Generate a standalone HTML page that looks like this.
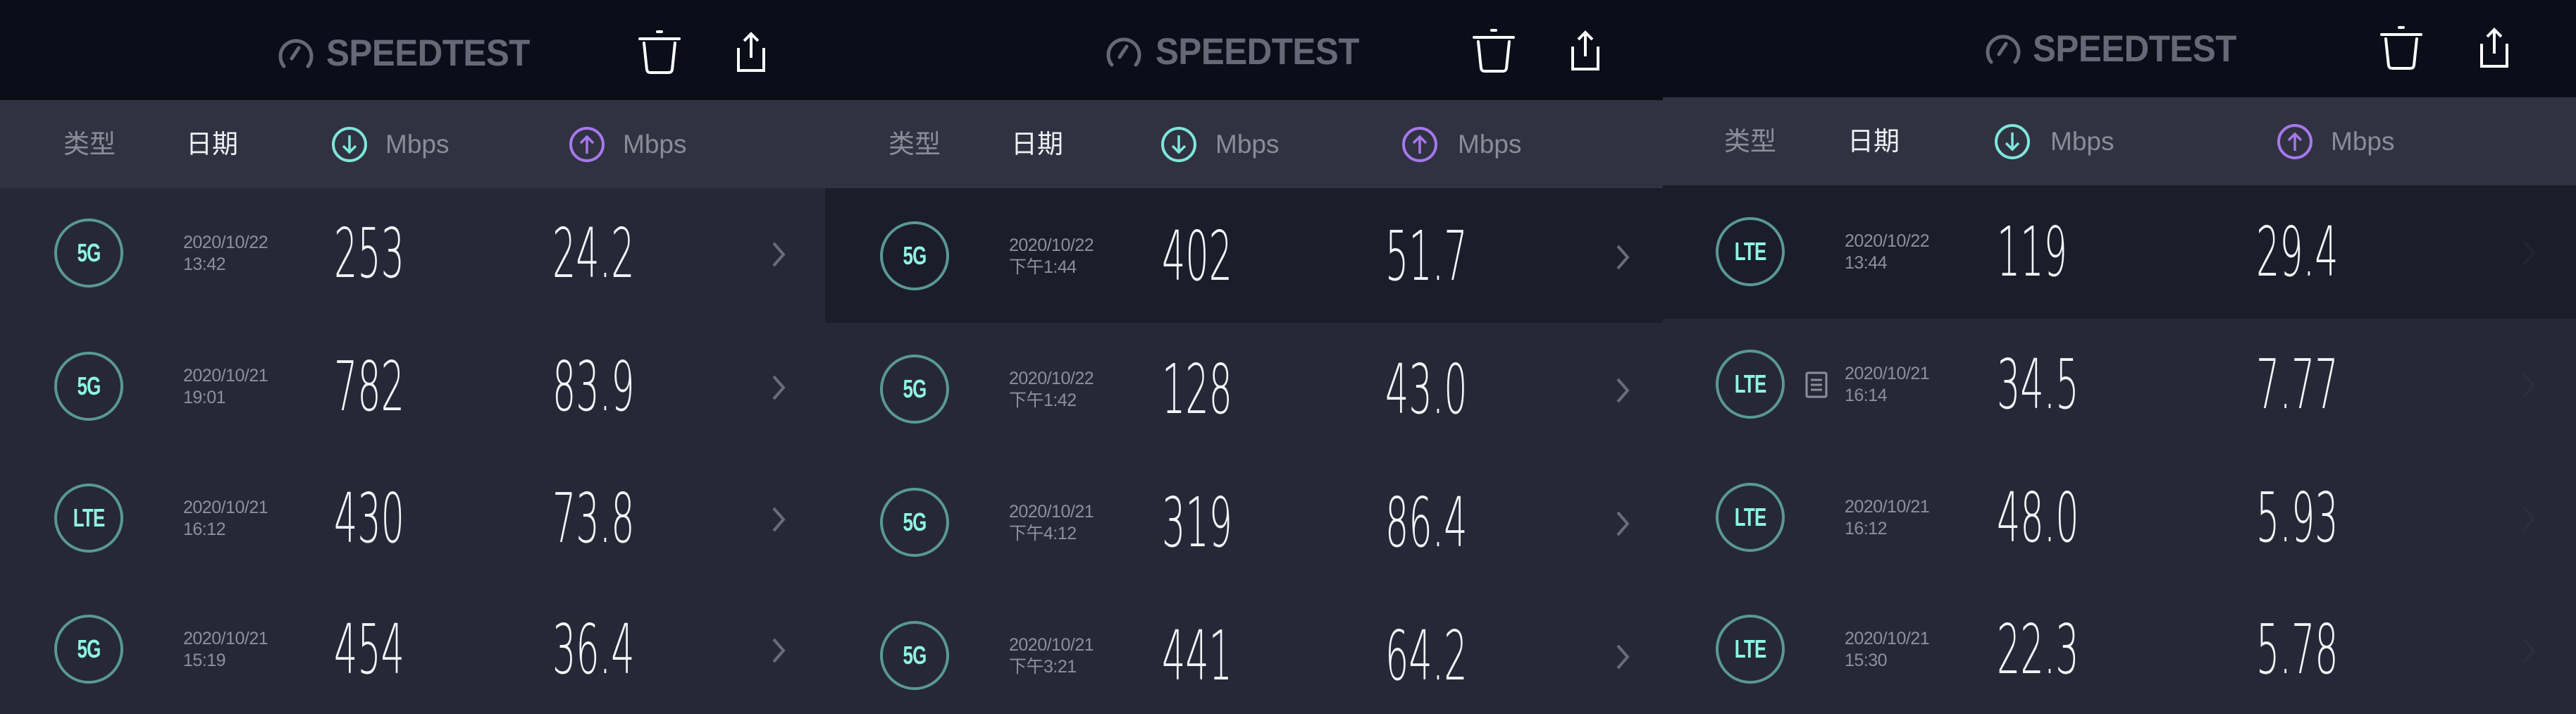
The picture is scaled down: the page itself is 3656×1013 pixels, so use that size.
<!DOCTYPE html>
<html><head><meta charset="utf-8"><style>
*{margin:0;padding:0;box-sizing:border-box}
body{width:3656px;height:1013px;background:#262837;position:relative;overflow:hidden;font-family:"Liberation Sans","Noto Sans CJK SC",sans-serif}
.p{position:absolute;top:0;height:1013px;overflow:hidden;background:#262837}
.a{position:absolute}
.top{position:absolute;left:0;right:0;top:0;background:#0b0d19}
.hdr{position:absolute;left:0;right:0;background:#303241}
.hl{position:absolute;left:0;right:0;background:#1b1d2b}
.logo{position:absolute;font-weight:bold;font-size:53px;line-height:50px;color:#666877;letter-spacing:-0.5px;transform:scaleX(.93);transform-origin:0 0}
.ht{position:absolute;font-size:37px;line-height:36px;color:#8a8c98;top:187px}
.w{color:#f0f0f4}
.badge{position:absolute;width:98px;height:98px;border:4px solid #5a9893;border-radius:50%;display:flex;align-items:center;justify-content:center}
.badge span{font-weight:bold;font-size:36px;color:#8ef3e4;transform:scaleX(.72);display:block;letter-spacing:-1px}
.dt{position:absolute;font-size:25px;line-height:31px;color:#8d8f9b;letter-spacing:-0.5px}
.n{position:absolute;font-family:"DejaVu Sans","Liberation Sans",sans-serif;font-weight:200;font-size:97px;line-height:99px;color:#f4f4f8;transform:scaleX(.54);transform-origin:0 0;white-space:nowrap;top:0}
.ch{position:absolute}
</style></head><body>

<!-- PANEL 1 -->
<div class="p" style="left:0;width:1171px">
<div class="top" style="height:142px"></div>
<div class="hdr" style="top:142px;height:125px"></div>
<svg class="a" style="left:394px;top:52px" width="52" height="46" viewBox="0 0 52 46"><path d="M9 42 A22 22 0 1 1 43 42" fill="none" stroke="#666877" stroke-width="5" stroke-linecap="round"/><path d="M20 31 L30 16" stroke="#666877" stroke-width="5" stroke-linecap="round"/></svg>
<div class="logo" style="left:463px;top:51px">SPEEDTEST</div>
<svg class="a" style="left:905px;top:42px" width="62" height="64" viewBox="0 0 62 64"><path d="M28 3h6M3 13h56M9 19l4 38q1 4 5 4h26q4 0 5-4l4-38" fill="none" stroke="#fff" stroke-width="4" stroke-linecap="round"/></svg>
<svg class="a" style="left:1043px;top:44px" width="46" height="60" viewBox="0 0 46 60"><path d="M23 4v34M13 14l10-10 10 10M5 24v32h36V24" fill="none" stroke="#fff" stroke-width="4"/></svg>
<div class="ht" style="left:90px">类型</div><div class="ht w" style="left:264px">日期</div>
<svg class="a" style="left:470px;top:179px" width="52" height="52" viewBox="0 0 52 52"><circle cx="26" cy="26" r="23" fill="none" stroke="#7ee6da" stroke-width="4"/><path d="M26 13v24M17 28l9 9 9-9" fill="none" stroke="#7ee6da" stroke-width="3.5"/></svg>
<div class="ht" style="left:547px">Mbps</div>
<svg class="a" style="left:807px;top:179px" width="52" height="52" viewBox="0 0 52 52"><circle cx="26" cy="26" r="23" fill="none" stroke="#a678ec" stroke-width="4"/><path d="M26 39V15M17 24l9-9 9 9" fill="none" stroke="#a678ec" stroke-width="3.5"/></svg>
<div class="ht" style="left:884px">Mbps</div>

<div class="badge" style="left:77px;top:310px"><span>5G</span></div>
<div class="dt" style="left:260px;top:329px">2020/10/22<br>13:42</div>
<div class="n" style="left:474px;top:310px">253</div><div class="n" style="left:784px;top:310px">24.2</div>
<svg class="ch" style="left:1094px;top:342px" width="24" height="38" viewBox="0 0 24 38"><path d="M4 3l14 16-14 16" fill="none" stroke="#6a6c7a" stroke-width="4"/></svg>

<div class="badge" style="left:77px;top:499px"><span>5G</span></div>
<div class="dt" style="left:260px;top:518px">2020/10/21<br>19:01</div>
<div class="n" style="left:474px;top:499px">782</div><div class="n" style="left:784px;top:499px">83.9</div>
<svg class="ch" style="left:1094px;top:531px" width="24" height="38" viewBox="0 0 24 38"><path d="M4 3l14 16-14 16" fill="none" stroke="#6a6c7a" stroke-width="4"/></svg>

<div class="badge" style="left:77px;top:686px"><span>LTE</span></div>
<div class="dt" style="left:260px;top:705px">2020/10/21<br>16:12</div>
<div class="n" style="left:474px;top:686px">430</div><div class="n" style="left:784px;top:686px">73.8</div>
<svg class="ch" style="left:1094px;top:718px" width="24" height="38" viewBox="0 0 24 38"><path d="M4 3l14 16-14 16" fill="none" stroke="#6a6c7a" stroke-width="4"/></svg>

<div class="badge" style="left:77px;top:872px"><span>5G</span></div>
<div class="dt" style="left:260px;top:891px">2020/10/21<br>15:19</div>
<div class="n" style="left:474px;top:872px">454</div><div class="n" style="left:784px;top:872px">36.4</div>
<svg class="ch" style="left:1094px;top:904px" width="24" height="38" viewBox="0 0 24 38"><path d="M4 3l14 16-14 16" fill="none" stroke="#6a6c7a" stroke-width="4"/></svg>
</div>

<!-- PANEL 2 -->
<div class="p" style="left:1171px;width:1189px">
<div class="top" style="height:142px"></div>
<div class="hdr" style="top:142px;height:125px"></div>
<div class="hl" style="top:267px;height:191px"></div>
<svg class="a" style="left:398px;top:50px" width="52" height="46" viewBox="0 0 52 46"><path d="M9 42 A22 22 0 1 1 43 42" fill="none" stroke="#666877" stroke-width="5" stroke-linecap="round"/><path d="M20 31 L30 16" stroke="#666877" stroke-width="5" stroke-linecap="round"/></svg>
<div class="logo" style="left:469px;top:49px">SPEEDTEST</div>
<svg class="a" style="left:918px;top:40px" width="62" height="64" viewBox="0 0 62 64"><path d="M28 3h6M3 13h56M9 19l4 38q1 4 5 4h26q4 0 5-4l4-38" fill="none" stroke="#fff" stroke-width="4" stroke-linecap="round"/></svg>
<svg class="a" style="left:1056px;top:42px" width="46" height="60" viewBox="0 0 46 60"><path d="M23 4v34M13 14l10-10 10 10M5 24v32h36V24" fill="none" stroke="#fff" stroke-width="4"/></svg>
<div class="ht" style="left:90px">类型</div><div class="ht w" style="left:264px">日期</div>
<svg class="a" style="left:476px;top:179px" width="52" height="52" viewBox="0 0 52 52"><circle cx="26" cy="26" r="23" fill="none" stroke="#7ee6da" stroke-width="4"/><path d="M26 13v24M17 28l9 9 9-9" fill="none" stroke="#7ee6da" stroke-width="3.5"/></svg>
<div class="ht" style="left:554px">Mbps</div>
<svg class="a" style="left:818px;top:179px" width="52" height="52" viewBox="0 0 52 52"><circle cx="26" cy="26" r="23" fill="none" stroke="#a678ec" stroke-width="4"/><path d="M26 39V15M17 24l9-9 9 9" fill="none" stroke="#a678ec" stroke-width="3.5"/></svg>
<div class="ht" style="left:898px">Mbps</div>

<div class="badge" style="left:78px;top:314px"><span>5G</span></div>
<div class="dt" style="left:261px;top:333px">2020/10/22<br>下午1:44</div>
<div class="n" style="left:478px;top:314px">402</div><div class="n" style="left:795px;top:314px">51.7</div>
<svg class="ch" style="left:1121px;top:346px" width="24" height="38" viewBox="0 0 24 38"><path d="M4 3l14 16-14 16" fill="none" stroke="#6a6c7a" stroke-width="4"/></svg>

<div class="badge" style="left:78px;top:503px"><span>5G</span></div>
<div class="dt" style="left:261px;top:522px">2020/10/22<br>下午1:42</div>
<div class="n" style="left:478px;top:503px">128</div><div class="n" style="left:795px;top:503px">43.0</div>
<svg class="ch" style="left:1121px;top:535px" width="24" height="38" viewBox="0 0 24 38"><path d="M4 3l14 16-14 16" fill="none" stroke="#6a6c7a" stroke-width="4"/></svg>

<div class="badge" style="left:78px;top:692px"><span>5G</span></div>
<div class="dt" style="left:261px;top:711px">2020/10/21<br>下午4:12</div>
<div class="n" style="left:478px;top:692px">319</div><div class="n" style="left:795px;top:692px">86.4</div>
<svg class="ch" style="left:1121px;top:724px" width="24" height="38" viewBox="0 0 24 38"><path d="M4 3l14 16-14 16" fill="none" stroke="#6a6c7a" stroke-width="4"/></svg>

<div class="badge" style="left:78px;top:881px"><span>5G</span></div>
<div class="dt" style="left:261px;top:900px">2020/10/21<br>下午3:21</div>
<div class="n" style="left:478px;top:881px">441</div><div class="n" style="left:795px;top:881px">64.2</div>
<svg class="ch" style="left:1121px;top:913px" width="24" height="38" viewBox="0 0 24 38"><path d="M4 3l14 16-14 16" fill="none" stroke="#6a6c7a" stroke-width="4"/></svg>
</div>

<!-- PANEL 3 -->
<div class="p" style="left:2360px;width:1296px">
<div class="top" style="height:138px"></div>
<div class="hdr" style="top:138px;height:125px"></div>
<div class="hl" style="top:263px;height:189px"></div>
<svg class="a" style="left:457px;top:46px" width="52" height="46" viewBox="0 0 52 46"><path d="M9 42 A22 22 0 1 1 43 42" fill="none" stroke="#666877" stroke-width="5" stroke-linecap="round"/><path d="M20 31 L30 16" stroke="#666877" stroke-width="5" stroke-linecap="round"/></svg>
<div class="logo" style="left:525px;top:45px">SPEEDTEST</div>
<svg class="a" style="left:1017px;top:36px" width="62" height="64" viewBox="0 0 62 64"><path d="M28 3h6M3 13h56M9 19l4 38q1 4 5 4h26q4 0 5-4l4-38" fill="none" stroke="#fff" stroke-width="4" stroke-linecap="round"/></svg>
<svg class="a" style="left:1157px;top:38px" width="46" height="60" viewBox="0 0 46 60"><path d="M23 4v34M13 14l10-10 10 10M5 24v32h36V24" fill="none" stroke="#fff" stroke-width="4"/></svg>
<div class="ht" style="left:87px;top:183px">类型</div><div class="ht w" style="left:262px;top:183px">日期</div>
<svg class="a" style="left:470px;top:175px" width="52" height="52" viewBox="0 0 52 52"><circle cx="26" cy="26" r="23" fill="none" stroke="#7ee6da" stroke-width="4"/><path d="M26 13v24M17 28l9 9 9-9" fill="none" stroke="#7ee6da" stroke-width="3.5"/></svg>
<div class="ht" style="left:550px;top:183px">Mbps</div>
<svg class="a" style="left:871px;top:175px" width="52" height="52" viewBox="0 0 52 52"><circle cx="26" cy="26" r="23" fill="none" stroke="#a678ec" stroke-width="4"/><path d="M26 39V15M17 24l9-9 9 9" fill="none" stroke="#a678ec" stroke-width="3.5"/></svg>
<div class="ht" style="left:948px;top:183px">Mbps</div>

<div class="badge" style="left:75px;top:308px"><span>LTE</span></div>
<div class="dt" style="left:258px;top:327px">2020/10/22<br>13:44</div>
<div class="n" style="left:474px;top:308px">119</div><div class="n" style="left:842px;top:308px">29.4</div>
<svg class="ch" style="left:1218px;top:340px" width="24" height="38" viewBox="0 0 24 38"><path d="M4 3l14 16-14 16" fill="none" stroke="#22242f" stroke-width="4"/></svg>

<div class="badge" style="left:75px;top:496px"><span>LTE</span></div>
<svg class="a" style="left:202px;top:527px" width="32" height="38" viewBox="0 0 32 38"><rect x="2" y="2" width="28" height="34" rx="2" fill="none" stroke="#8d8f9b" stroke-width="3"/><path d="M8 12h16M8 19h16M8 26h16" stroke="#8d8f9b" stroke-width="3"/></svg>
<div class="dt" style="left:258px;top:515px">2020/10/21<br>16:14</div>
<div class="n" style="left:474px;top:496px">34.5</div><div class="n" style="left:842px;top:496px">7.77</div>
<svg class="ch" style="left:1218px;top:528px" width="24" height="38" viewBox="0 0 24 38"><path d="M4 3l14 16-14 16" fill="none" stroke="#2c2e3b" stroke-width="4"/></svg>

<div class="badge" style="left:75px;top:685px"><span>LTE</span></div>
<div class="dt" style="left:258px;top:704px">2020/10/21<br>16:12</div>
<div class="n" style="left:474px;top:685px">48.0</div><div class="n" style="left:842px;top:685px">5.93</div>
<svg class="ch" style="left:1218px;top:717px" width="24" height="38" viewBox="0 0 24 38"><path d="M4 3l14 16-14 16" fill="none" stroke="#2c2e3b" stroke-width="4"/></svg>

<div class="badge" style="left:75px;top:872px"><span>LTE</span></div>
<div class="dt" style="left:258px;top:891px">2020/10/21<br>15:30</div>
<div class="n" style="left:474px;top:872px">22.3</div><div class="n" style="left:842px;top:872px">5.78</div>
<svg class="ch" style="left:1218px;top:904px" width="24" height="38" viewBox="0 0 24 38"><path d="M4 3l14 16-14 16" fill="none" stroke="#2c2e3b" stroke-width="4"/></svg>
</div>

</body></html>
